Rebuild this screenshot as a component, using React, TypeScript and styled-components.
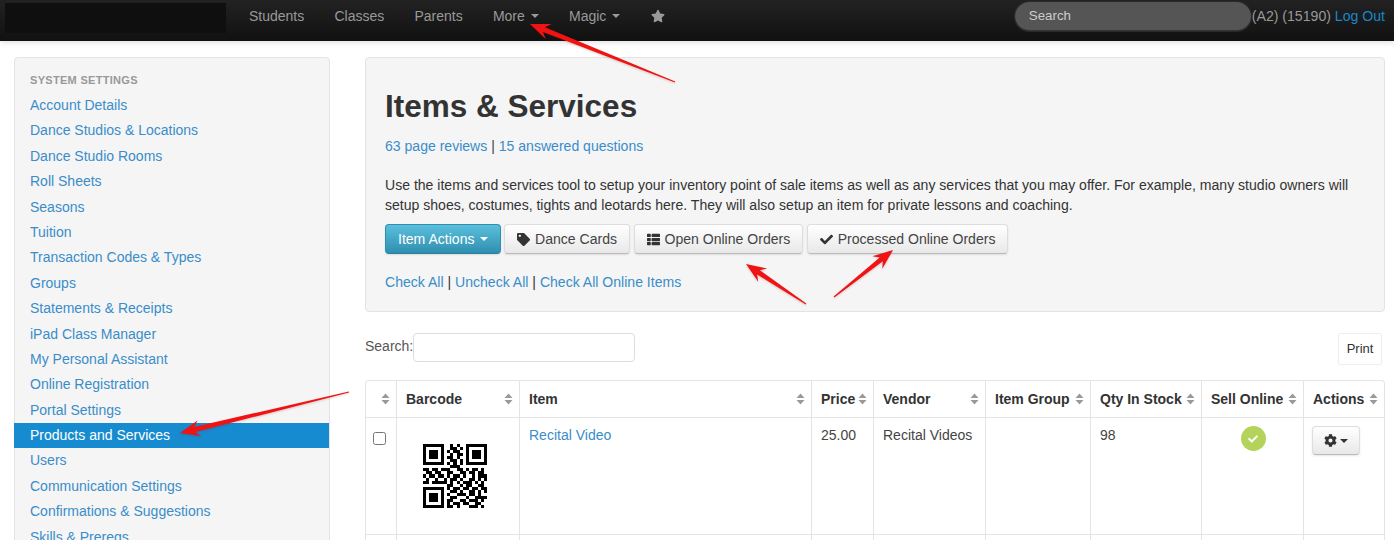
import React from 'react';
import styled, { createGlobalStyle } from 'styled-components';
import { FaCheck, FaCog, FaStar, FaTag, FaThList } from 'react-icons/fa';

const LINK = '#3a8dc9';

const GlobalStyle = createGlobalStyle`
  html, body {
    margin: 0;
    height: 540px;
    overflow: hidden;
    background: #fff;
  }
  body {
    font-family: "Liberation Sans", Arial, sans-serif;
    font-size: 14px;
    line-height: 20px;
    color: #444;
  }
  a {
    color: ${LINK};
    text-decoration: none;
  }
`;

const Page = styled.div`
  position: relative;
  width: 1394px;
  height: 540px;
  overflow: hidden;
`;

const Navbar = styled.nav`
  display: flex;
  align-items: flex-start;
  height: 41px;
  padding-left: 5px;
  background: linear-gradient(#222, #111);
  box-shadow: 0 1px 6px rgba(0, 0, 0, 0.15);
`;

const Logo = styled.div`
  width: 221px;
  height: 30px;
  margin-top: 3px;
  background: #0f0f0f;
`;

const NavItems = styled.div`
  display: flex;
  align-items: center;
  gap: 30.2px;
  height: 32px;
  margin-left: 23px;
`;

const NavItem = styled.a`
  display: inline-flex;
  align-items: center;
  gap: 6px;
  color: #999;
`;

const Caret = styled.span<{ $color?: string }>`
  width: 0;
  height: 0;
  border-left: 4px solid transparent;
  border-right: 4px solid transparent;
  border-top: 4px solid ${p => p.$color || '#999'};
`;

const NavRight = styled.div`
  display: flex;
  align-items: center;
  height: 32px;
  margin-left: auto;
  padding-right: 9px;
  color: #999;
`;

const NavSearch = styled.div`
  width: 236px;
  height: 29px;
  padding-left: 14px;
  box-sizing: border-box;
  border-radius: 15px;
  line-height: 27px;
  font-size: 13.3px;
  color: #ccc;
  background: #555;
  border-bottom: 1px solid #333;
  box-shadow: 0 0 0 1px #2a2a2a;
`;

const NavUser = styled.span`
  margin-left: 1px;
  font-size: 14.1px;
  white-space: nowrap;
  a {
    color: #1a87c9;
  }
`;

const Columns = styled.div`
  display: flex;
  align-items: flex-start;
  gap: 35px;
  padding: 16px 9px 0 14px;
`;

const Sidebar = styled.aside`
  flex: none;
  width: 316px;
  box-sizing: border-box;
  padding: 11px 0 20px;
  background: #f5f5f5;
  border: 1px solid #e3e3e3;
  border-radius: 4px;
`;

const SideHeader = styled.div`
  padding-left: 15px;
  margin-bottom: 2px;
  line-height: 22px;
  font-size: 11px;
  font-weight: bold;
  letter-spacing: 0.3px;
  color: #999;
`;

const SideLink = styled.a<{ $active?: boolean }>`
  display: block;
  height: 25.4px;
  margin-left: -1px;
  padding-left: 16px;
  line-height: 25.4px;
  color: ${p => (p.$active ? '#fff' : LINK)};
  background: ${p => (p.$active ? '#168bd0' : 'transparent')};
`;

const Main = styled.main`
  flex: 1;
  min-width: 0;
`;

const Hero = styled.section`
  box-sizing: border-box;
  height: 255px;
  padding: 28px 19px 0;
  font-size: 14.06px;
  background: #f5f5f5;
  border: 1px solid #e3e3e3;
  border-radius: 4px;
`;

const Title = styled.h1`
  margin: 0 0 10px;
  font-size: 31.5px;
  line-height: 40px;
  font-weight: bold;
  color: #333;
`;

const Intro = styled.p`
  margin: 19px 0 9px;
  color: #333;
`;

const ButtonRow = styled.div`
  display: flex;
  gap: 3.5px;
`;

const Button = styled.button<{ $primary?: boolean }>`
  display: inline-flex;
  align-items: center;
  gap: 5px;
  height: 30px;
  padding: 0 12px;
  font: inherit;
  color: ${p => (p.$primary ? '#fff' : '#444')};
  background: ${p =>
    p.$primary
      ? 'linear-gradient(#5bbfdc, #2f8fb0)'
      : 'linear-gradient(#fff, #e8e8e8)'};
  border: 1px solid ${p => (p.$primary ? '#2f8fb0' : '#ddd')};
  border-bottom-color: ${p => (p.$primary ? '#2a7f9d' : '#bbb')};
  border-radius: 4px;
  box-shadow: 0 1px 2px rgba(0, 0, 0, 0.1);
  svg {
    font-size: 13px;
    color: #333;
  }
`;

const LinkLine = styled.div`
  margin-top: 18px;
  color: #333;
`;

const TableTools = styled.div`
  display: flex;
  align-items: flex-start;
  justify-content: space-between;
  height: 47px;
  margin-top: 21px;
  padding-right: 3px;
`;

const SearchLabel = styled.label`
  display: flex;
  align-items: flex-start;
  line-height: 26px;
  color: #555;
`;

const SearchBox = styled.input`
  width: 222px;
  height: 29px;
  box-sizing: border-box;
  background: #fff;
  border: 1px solid #ddd;
  border-radius: 4px;
`;

const PrintButton = styled.button`
  width: 44px;
  height: 32px;
  padding: 0;
  font: inherit;
  font-size: 13px;
  color: #333;
  background: #fff;
  border: 1px solid #eee;
  border-radius: 2px;
`;

const Table = styled.table`
  width: 1020px;
  table-layout: fixed;
  border-collapse: separate;
  border-spacing: 0;
  border: 1px solid #e4e4e4;
  border-bottom: 0;
  border-radius: 4px 4px 0 0;
`;

const HeadCell = styled.th`
  height: 36px;
  padding: 0 6px 0 9px;
  text-align: left;
  font-weight: bold;
  color: #333;
  border-bottom: 1px solid #e4e4e4;
  & + & {
    border-left: 1px solid #e4e4e4;
  }
`;

const HeadInner = styled.div`
  display: flex;
  align-items: center;
  justify-content: space-between;
  white-space: nowrap;
`;

const Cell = styled.td<{ $center?: boolean }>`
  height: 117px;
  box-sizing: border-box;
  padding: 7px 9px;
  vertical-align: top;
  text-align: ${p => (p.$center ? 'center' : 'left')};
  border-bottom: 1px solid #e4e4e4;
  & + & {
    border-left: 1px solid #e4e4e4;
  }
`;

const RowCheck = styled.input`
  display: block;
  width: 13px;
  height: 13px;
  margin: 7px 0 0 -2px;
`;

const BarcodeCell = styled(Cell)`
  padding: 26px 0 0 26px;
`;

const OnlineBadge = styled.span`
  display: inline-flex;
  align-items: center;
  justify-content: center;
  width: 25px;
  height: 25px;
  margin: 1px 0 0 1px;
  border-radius: 50%;
  color: #fff;
  font-size: 10px;
  background: #b3d35a;
`;

const GearButton = styled(Button)`
  gap: 3px;
  width: 48px;
  height: 29px;
  padding: 0;
  margin: 1px 0 0 -1px;
  justify-content: center;
`;

const ArrowLayer = styled.svg`
  position: absolute;
  left: 0;
  top: 0;
  pointer-events: none;
  filter: drop-shadow(0 1px 1px rgba(120, 0, 0, 0.2));
`;

const sideLinks = [
  'Account Details',
  'Dance Studios & Locations',
  'Dance Studio Rooms',
  'Roll Sheets',
  'Seasons',
  'Tuition',
  'Transaction Codes & Types',
  'Groups',
  'Statements & Receipts',
  'iPad Class Manager',
  'My Personal Assistant',
  'Online Registration',
  'Portal Settings',
  'Products and Services',
  'Users',
  'Communication Settings',
  'Confirmations & Suggestions',
  'Skills & Prereqs',
];

const columns = [
  { label: '', width: 30 },
  { label: 'Barcode', width: 123 },
  { label: 'Item', width: 292 },
  { label: 'Price', width: 62 },
  { label: 'Vendor', width: 112 },
  { label: 'Item Group', width: 105 },
  { label: 'Qty In Stock', width: 111 },
  { label: 'Sell Online', width: 102 },
  { label: 'Actions', width: 81 },
];

const QR_ROWS = [
  '111111100101001111111',
  '100000100110101000001',
  '101110101011001011101',
  '101110100101101011101',
  '101110101101001011101',
  '100000100110101000001',
  '111111101010101111111',
  '000000000111000000000',
  '110110111001101011010',
  '011011001100110110110',
  '101101101011010010111',
  '010010010110100110101',
  '110111110101011101010',
  '000000001100101100110',
  '111111101011011011011',
  '100000100110100110101',
  '101110101001110110100',
  '101110100110001001111',
  '101110101100110111010',
  '100000101011011001100',
  '111111101101000111010',
];

function QrCode() {
  let d = '';
  QR_ROWS.forEach((row, y) => {
    row.split('').forEach((bit, x) => {
      if (bit === '1') d += `M${x} ${y}h1v1h-1z`;
    });
  });
  return (
    <svg width="64" height="64" viewBox="0 0 21 21" shapeRendering="crispEdges">
      <path d={d} fill="#000" />
    </svg>
  );
}

function SortIcon() {
  return (
    <svg width="9" height="12" viewBox="0 0 9 12" style={{ flex: 'none' }}>
      <path d="M4.5 0.5L8.5 5H0.5zM0.5 7h8l-4 4.5z" fill="#999" />
    </svg>
  );
}

// tapered red annotation arrow, thin at the tail and wide at the head
function arrowPoints(x1: number, y1: number, x2: number, y2: number) {
  const len = Math.hypot(x2 - x1, y2 - y1);
  const ux = (x2 - x1) / len;
  const uy = (y2 - y1) / len;
  const nx = -uy;
  const ny = ux;
  const at = (back: number, side: number) =>
    `${(x2 - ux * back + nx * side).toFixed(1)},${(y2 - uy * back + ny * side).toFixed(1)}`;
  return [
    at(len, 0.6),
    at(15, 2.5),
    at(20, 8),
    at(0, 0),
    at(20, -8),
    at(15, -2.5),
    at(len, -0.6),
  ].join(' ');
}

const arrows = [
  [675, 82, 530, 24],
  [806, 304, 746, 264],
  [834, 297, 893, 250],
  [349, 392, 180, 433],
];

export default function App() {
  return (
    <Page>
      <GlobalStyle />
      <Navbar>
        <Logo />
        <NavItems>
          <NavItem>Students</NavItem>
          <NavItem>Classes</NavItem>
          <NavItem>Parents</NavItem>
          <NavItem>
            More <Caret />
          </NavItem>
          <NavItem>
            Magic <Caret />
          </NavItem>
          <NavItem>
            <FaStar size={14} />
          </NavItem>
        </NavItems>
        <NavRight>
          <NavSearch>Search</NavSearch>
          <NavUser>
            (A2) (15190) <a href="#">Log Out</a>
          </NavUser>
        </NavRight>
      </Navbar>
      <Columns>
        <Sidebar>
          <SideHeader>SYSTEM SETTINGS</SideHeader>
          {sideLinks.map(link => (
            <SideLink key={link} href="#" $active={link === 'Products and Services'}>
              {link}
            </SideLink>
          ))}
        </Sidebar>
        <Main>
          <Hero>
            <Title>Items &amp; Services</Title>
            <div>
              <a href="#">63 page reviews</a> | <a href="#">15 answered questions</a>
            </div>
            <Intro>
              Use the items and services tool to setup your inventory point of sale items as
              well as any services that you may offer. For example, many studio owners will
              setup shoes, costumes, tights and leotards here. They will also setup an item for
              private lessons and coaching.
            </Intro>
            <ButtonRow>
              <Button $primary>
                Item Actions <Caret $color="#fff" />
              </Button>
              <Button>
                <FaTag />
                Dance Cards
              </Button>
              <Button>
                <FaThList />
                Open Online Orders
              </Button>
              <Button>
                <FaCheck />
                Processed Online Orders
              </Button>
            </ButtonRow>
            <LinkLine>
              <a href="#">Check All</a> | <a href="#">Uncheck All</a> |{' '}
              <a href="#">Check All Online Items</a>
            </LinkLine>
          </Hero>
          <TableTools>
            <SearchLabel>
              Search:
              <SearchBox />
            </SearchLabel>
            <PrintButton>Print</PrintButton>
          </TableTools>
          <Table>
            <colgroup>
              {columns.map((col, i) => (
                <col key={i} style={{ width: col.width }} />
              ))}
            </colgroup>
            <thead>
              <tr>
                {columns.map((col, i) => (
                  <HeadCell key={i}>
                    <HeadInner>
                      <span>{col.label}</span>
                      <SortIcon />
                    </HeadInner>
                  </HeadCell>
                ))}
              </tr>
            </thead>
            <tbody>
              <tr>
                <Cell>
                  <RowCheck type="checkbox" />
                </Cell>
                <BarcodeCell>
                  <QrCode />
                </BarcodeCell>
                <Cell>
                  <a href="#">Recital Video</a>
                </Cell>
                <Cell>25.00</Cell>
                <Cell>Recital Videos</Cell>
                <Cell />
                <Cell>98</Cell>
                <Cell $center>
                  <OnlineBadge>
                    <FaCheck />
                  </OnlineBadge>
                </Cell>
                <Cell>
                  <GearButton>
                    <FaCog />
                    <Caret $color="#333" />
                  </GearButton>
                </Cell>
              </tr>
              <tr>
                {columns.map((col, i) => (
                  <Cell key={i} />
                ))}
              </tr>
            </tbody>
          </Table>
        </Main>
      </Columns>
      <ArrowLayer width="1394" height="540" viewBox="0 0 1394 540">
        {arrows.map(([x1, y1, x2, y2], i) => (
          <polygon key={i} points={arrowPoints(x1, y1, x2, y2)} fill="#f01313" />
        ))}
      </ArrowLayer>
    </Page>
  );
}
